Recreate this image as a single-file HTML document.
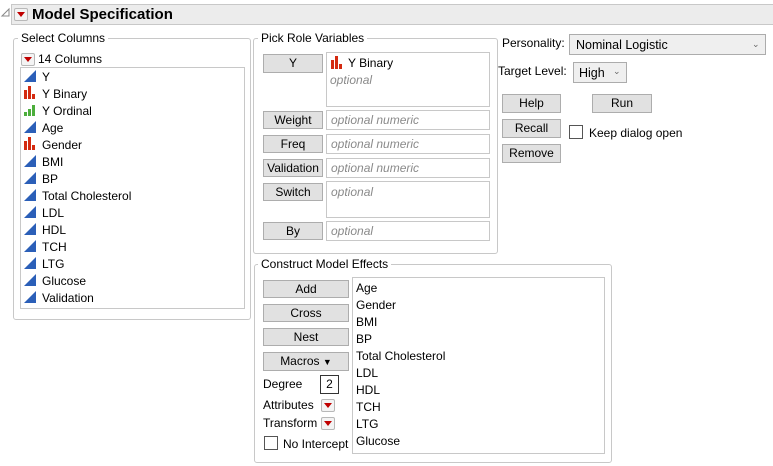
<!DOCTYPE html>
<html><head><meta charset="utf-8"><style>
*{box-sizing:border-box;margin:0;padding:0}
body{width:773px;height:466px;background:#fff;font-family:"Liberation Sans",sans-serif;font-size:12px;color:#000;position:relative;overflow:hidden}
.a{position:absolute}
.t{position:absolute;white-space:nowrap;line-height:14px}
.fr{position:absolute;border:1px solid #c8c8c8;border-radius:3px}
.lg{position:absolute;background:#fff;padding:0 3px;line-height:14px;white-space:nowrap}
.btn{position:absolute;background:#e1e1e1;border:1px solid #adadad;text-align:center;line-height:16px;white-space:nowrap}
.box{position:absolute;background:#fff;border:1px solid #c8c8c8}
.opt{color:#8a8a8a;font-style:italic;position:absolute;left:4px;white-space:nowrap}
.rb{position:absolute;width:14px;height:13px;border:1px solid #b8b8b8;background:#f4f4f4;border-radius:2px}
.rb:after{content:"";position:absolute;left:2px;top:3px;border-left:4px solid transparent;border-right:4px solid transparent;border-top:5px solid #c00000}
.cb{position:absolute;width:14px;height:14px;border:1px solid #555;background:#fff}
.it{position:absolute;white-space:nowrap;line-height:14px}
</style></head><body>
<svg class="a" style="left:0;top:0" width="12" height="20"><path d="M2 16 L9 9 L9 16Z" fill="none" stroke="#888" stroke-width="1"/></svg>
<div class="a" style="left:11px;top:4px;width:762px;height:21px;background:#ececec;border:1px solid #c8c8c8;border-right:none"></div>
<div class="rb" style="left:14px;top:8px"></div>
<div class="t" style="left:32px;top:6px;font-size:15px;font-weight:bold;line-height:18px">Model Specification</div>

<div class="fr" style="left:13px;top:38px;width:238px;height:282px"></div>
<div class="lg" style="left:18px;top:31px">Select Columns</div>
<div class="rb" style="left:21px;top:53px"></div>
<div class="t" style="left:38px;top:52px">14 Columns</div>
<div class="box" style="left:20px;top:67px;width:225px;height:242px"></div>
<svg class="a" style="left:0;top:0" width="400" height="320">
<g fill="#2b5fb8">
<path d="M24 82 L36 70 L36 82Z"/><path d="M24 133 L36 121 L36 133Z"/><path d="M24 167 L36 155 L36 167Z"/><path d="M24 184 L36 172 L36 184Z"/><path d="M24 201 L36 189 L36 201Z"/><path d="M24 218 L36 206 L36 218Z"/><path d="M24 235 L36 223 L36 235Z"/><path d="M24 252 L36 240 L36 252Z"/><path d="M24 269 L36 257 L36 269Z"/><path d="M24 286 L36 274 L36 286Z"/><path d="M24 303 L36 291 L36 303Z"/>
</g>
<g fill="#d42a10">
<rect x="24" y="90" width="3" height="9"/><rect x="28" y="86" width="3" height="13"/><rect x="32" y="94" width="3" height="5"/>
<rect x="24" y="141" width="3" height="9"/><rect x="28" y="137" width="3" height="13"/><rect x="32" y="145" width="3" height="5"/>
<rect x="331" y="60" width="3" height="9"/><rect x="335" y="56" width="3" height="13"/><rect x="339" y="64" width="3" height="5"/>
</g>
<g fill="#4cae3c"><rect x="24" y="112" width="3" height="4"/><rect x="28" y="109" width="3" height="7"/><rect x="32" y="105" width="3" height="11"/></g>
</svg>
<div class="it" style="left:42px;top:70px">Y</div>
<div class="it" style="left:42px;top:87px">Y Binary</div>
<div class="it" style="left:42px;top:104px">Y Ordinal</div>
<div class="it" style="left:42px;top:121px">Age</div>
<div class="it" style="left:42px;top:138px">Gender</div>
<div class="it" style="left:42px;top:155px">BMI</div>
<div class="it" style="left:42px;top:172px">BP</div>
<div class="it" style="left:42px;top:189px">Total Cholesterol</div>
<div class="it" style="left:42px;top:206px">LDL</div>
<div class="it" style="left:42px;top:223px">HDL</div>
<div class="it" style="left:42px;top:240px">TCH</div>
<div class="it" style="left:42px;top:257px">LTG</div>
<div class="it" style="left:42px;top:274px">Glucose</div>
<div class="it" style="left:42px;top:291px">Validation</div>

<div class="fr" style="left:253px;top:38px;width:245px;height:216px"></div>
<div class="lg" style="left:258px;top:31px">Pick Role Variables</div>
<div class="btn" style="left:263px;top:54px;width:60px;height:19px">Y</div>
<div class="box" style="left:326px;top:52px;width:164px;height:55px;background:transparent"></div>
<div class="t" style="left:348px;top:56px">Y Binary</div>
<div class="t" style="left:330px;top:73px;color:#8a8a8a;font-style:italic">optional</div>
<div class="btn" style="left:263px;top:111px;width:60px;height:18px">Weight</div>
<div class="box" style="left:326px;top:110px;width:164px;height:20px"><span class="opt" style="top:2px">optional numeric</span></div>
<div class="btn" style="left:263px;top:135px;width:60px;height:18px">Freq</div>
<div class="box" style="left:326px;top:134px;width:164px;height:20px"><span class="opt" style="top:2px">optional numeric</span></div>
<div class="btn" style="left:263px;top:159px;width:60px;height:18px">Validation</div>
<div class="box" style="left:326px;top:158px;width:164px;height:20px"><span class="opt" style="top:2px">optional numeric</span></div>
<div class="btn" style="left:263px;top:183px;width:60px;height:18px">Switch</div>
<div class="box" style="left:326px;top:181px;width:164px;height:37px"><span class="opt" style="top:3px">optional</span></div>
<div class="btn" style="left:263px;top:222px;width:60px;height:18px">By</div>
<div class="box" style="left:326px;top:221px;width:164px;height:20px"><span class="opt" style="top:2px">optional</span></div>

<div class="t" style="left:502px;top:36px">Personality:</div>
<div class="a" style="left:569px;top:34px;width:197px;height:21px;background:#efefef;border:1px solid #acacac"></div>
<div class="t" style="left:576px;top:38px;font-size:12.5px">Nominal Logistic</div>
<div class="t" style="left:752px;top:37px;font-size:9px;color:#666">&#8964;</div>
<div class="t" style="left:498px;top:64px">Target Level:</div>
<div class="a" style="left:573px;top:62px;width:54px;height:21px;background:#efefef;border:1px solid #acacac"></div>
<div class="t" style="left:579px;top:66px;font-size:12.5px">High</div>
<div class="t" style="left:613px;top:64px;font-size:9px;color:#666">&#8964;</div>
<div class="btn" style="left:502px;top:94px;width:59px;height:19px">Help</div>
<div class="btn" style="left:592px;top:94px;width:60px;height:19px">Run</div>
<div class="btn" style="left:502px;top:119px;width:59px;height:19px">Recall</div>
<div class="cb" style="left:569px;top:125px"></div>
<div class="t" style="left:589px;top:126px">Keep dialog open</div>
<div class="btn" style="left:502px;top:144px;width:59px;height:19px">Remove</div>

<div class="fr" style="left:254px;top:264px;width:358px;height:199px"></div>
<div class="lg" style="left:258px;top:257px">Construct Model Effects</div>
<div class="btn" style="left:263px;top:280px;width:86px;height:18px">Add</div>
<div class="btn" style="left:263px;top:304px;width:86px;height:18px">Cross</div>
<div class="btn" style="left:263px;top:328px;width:86px;height:18px">Nest</div>
<div class="btn" style="left:263px;top:352px;width:86px;height:19px">Macros <span style="font-size:9px">&#9660;</span></div>
<div class="t" style="left:263px;top:377px">Degree</div>
<div class="box" style="left:320px;top:375px;width:19px;height:19px;border-color:#333;text-align:center;line-height:16px">2</div>
<div class="t" style="left:263px;top:398px">Attributes</div>
<div class="rb" style="left:321px;top:399px"></div>
<div class="t" style="left:263px;top:416px">Transform</div>
<div class="rb" style="left:321px;top:417px"></div>
<div class="cb" style="left:264px;top:436px"></div>
<div class="t" style="left:283px;top:437px">No Intercept</div>
<div class="box" style="left:352px;top:277px;width:253px;height:177px"></div>
<div class="it" style="left:356px;top:281px">Age</div>
<div class="it" style="left:356px;top:298px">Gender</div>
<div class="it" style="left:356px;top:315px">BMI</div>
<div class="it" style="left:356px;top:332px">BP</div>
<div class="it" style="left:356px;top:349px">Total Cholesterol</div>
<div class="it" style="left:356px;top:366px">LDL</div>
<div class="it" style="left:356px;top:383px">HDL</div>
<div class="it" style="left:356px;top:400px">TCH</div>
<div class="it" style="left:356px;top:417px">LTG</div>
<div class="it" style="left:356px;top:434px">Glucose</div>
</body></html>
